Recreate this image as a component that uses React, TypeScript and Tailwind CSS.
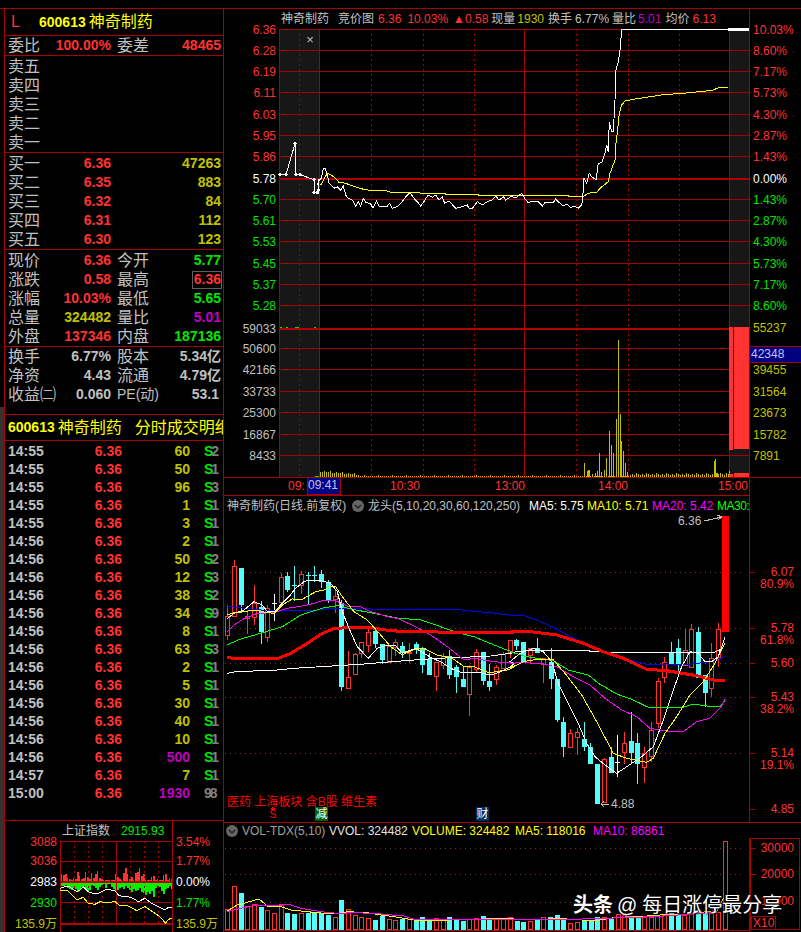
import React from "react";

const R = "#ff3232";
const G = "#00e600";
const Y = "#c0c000";
const W = "#c0c0c0";
const M = "#c000c0";
const L = "#a80000";

const zp = (ox: number, oy: number, p: number[]) => {
  const out: string[] = [];
  for (let i = 0; i < p.length; i += 2) out.push(`${(ox + p[i] / 3).toFixed(1)},${(oy + p[i + 1] / 3).toFixed(1)}`);
  return out.join(" ");
};

function T({ x, y, c, a, s = 12, children }: { x: number; y: number; c: string; a?: "start" | "end" | "middle"; s?: number; children: React.ReactNode }) {
  return (
    <text x={x} y={y} fill={c} textAnchor={a ?? "start"} dominantBaseline="central" fontSize={s}>
      {children}
    </text>
  );
}

function Row({ a, b, ac = W, c, d, bc, dc }: { a: string; b?: string; ac?: string; c?: string; d?: string; bc?: string; dc?: string }) {
  return (
    <div className="flex h-[19px] items-center pl-[3px] leading-[19px] whitespace-nowrap">
      <span className="w-[32px] shrink-0 text-[16px]" style={{ color: ac }}>{a}</span>
      <span className="w-[71px] shrink-0 text-right text-[14px] font-bold" style={{ color: bc }}>{b}</span>
      {c && <span className="ml-[6px] w-[32px] shrink-0 text-[16px] text-[#c0c0c0]">{c}</span>}
      {d && <span className="w-[72px] shrink-0 text-right text-[14px] font-bold" style={{ color: dc }}>{d}</span>}
    </div>
  );
}

function Book({ a, p, v }: { a: string; p?: string; v?: string }) {
  return (
    <div className="flex h-[19px] items-center pl-[3px] leading-[19px]">
      <span className="w-[32px] shrink-0 text-[16px] text-[#c0c0c0]">{a}</span>
      <span className="w-[71px] shrink-0 text-right text-[14px] font-bold text-[#ff3232]">{p}</span>
      <span className="w-[110px] shrink-0 text-right text-[14px] font-bold text-[#c0c000]">{v}</span>
    </div>
  );
}

const trades: [string, string, string, string][] = [
  ["14:55", "60", "S", "2"], ["14:55", "50", "S", "1"], ["14:55", "96", "S", "3"], ["14:55", "1", "S", "1"], ["14:55", "3", "S", "1"],
  ["14:56", "2", "S", "1"], ["14:56", "50", "S", "2"], ["14:56", "12", "S", "3"], ["14:56", "38", "S", "2"], ["14:56", "34", "S", "9"],
  ["14:56", "8", "S", "1"], ["14:56", "63", "S", "3"], ["14:56", "2", "S", "1"], ["14:56", "5", "S", "1"], ["14:56", "30", "S", "1"],
  ["14:56", "40", "S", "1"], ["14:56", "10", "S", "1"], ["14:56", "500", "S", "1"], ["14:57", "7", "S", "1"], ["15:00", "1930", "9", "8"],
];

const gridY = [29, 50, 71, 92, 114, 135, 156, 178, 199, 220, 241, 263, 284, 305, 328, 348, 369, 391, 412, 434, 455, 477];
const priceL: [string, string][] = [
  ["6.36", R], ["6.28", R], ["6.19", R], ["6.11", R], ["6.03", R], ["5.95", R], ["5.86", R], ["5.78", "#ffffff"], ["5.70", G], ["5.61", G], ["5.53", G], ["5.45", G], ["5.37", G], ["5.28", G],
];
const pctR: [string, string][] = [
  ["10.03%", R], ["8.60%", R], ["7.17%", R], ["5.73%", R], ["4.30%", R], ["2.87%", R], ["1.43%", R], ["0.00%", "#ffffff"], ["1.43%", G], ["2.87%", G], ["4.30%", G], ["5.73%", G], ["7.17%", G], ["8.60%", G],
];
const volL = ["59033", "50600", "42166", "33733", "25300", "16867", "8433"];
const volR = ["55237", "", "", "39455", "31564", "23673", "15782", "7891"];

const whiteA = [168,524,186,524,213,431,216,524,228,524,270,539,270,578,280,578,284,570,282,552,285,540,292,535,298,505,303,505,310,525,315,548,330,565,340,560,350,570,358,558,365,585,372,595,385,600,395,618,403,605,410,618,418,595,425,607,440,612,447,625,457,603,465,618,490,618,497,610,505,625,520,620,535,605,545,590,558,578,570,595,580,605,590,618,603,600,612,585,625,592,635,585,645,600,655,590,662,610,675,603,695,625,715,620,730,615,735,625,745,625,760,605,775,615,790,605,805,600,815,588,825,600,840,590,845,600,860,590,870,585];
const whiteB = [0,590,20,592,35,580,45,597,55,608,70,603,85,605,97,618,105,608,130,608,137,597,145,605,160,618,170,612,180,622,195,620,205,625,215,615,218,595,222,535,230,550,238,520,245,530,258,540,265,490,275,488,285,460,290,435,295,455,298,365,305,395,310,395,315,300,318,210,325,185,330,150,335,88,655,88];
const yellowA = [290,555,310,520,330,530,345,547,365,550,380,556,410,566,445,572,485,572,505,578,585,578,590,580,662,580,665,583,760,583,765,586,870,586];
const yellowB = [0,586,175,586,175,589,220,589,235,580,262,576,270,565,295,545,300,520,315,480,318,430,322,400,328,340,335,315,345,303,370,298,420,290,460,284,520,280,580,274,610,270,625,263,655,262];
const dots = [[168,524],[186,524],[213,431],[216,524],[228,524],[270,539],[270,578],[280,578],[284,570],[282,552],[285,540]];
const spikes: [number, number][] = [[222,490],[230,512],[235,510],[238,510],[247,522],[255,518],[262,513],[268,460],[274,515],[282,510],[289,475],[298,393],[304,435],[310,458],[317,405],[319,358],[325,120],[331,342],[334,422],[340,452],[346,490],[352,515],[612,483],[616,478],[622,520],[630,518],[657,513]];

function Intraday() {
  const bars: React.ReactNode[] = [];
  for (let x = 320; x < 729; x += 2) {
    let h = 1;
    if (x < 360) h = 5 - Math.floor((x - 320) / 12) + (x % 6 === 0 ? 1 : 0);
    else if (x < 585) h = x % 14 === 0 ? 2 : 1;
    else if (x > 628) h = 2 + ((x * 7) % 5) % 3;
    bars.push(<line key={x} x1={x + 0.5} x2={x + 0.5} y1={477} y2={477 - h} stroke={Y} />);
  }
  return (
    <svg width={577} height={466} viewBox="224 29 577 466" shapeRendering="crispEdges" className="block overflow-visible">
      <rect x={279} y={29} width={40} height={448} fill="#171717" />
      <rect x={729} y={29} width={20} height={448} fill="#171717" />
      {gridY.map((y) => (
        <line key={y} x1={279} x2={749} y1={y + 0.5} y2={y + 0.5} stroke={y === 178 || y === 328 ? "#b00000" : L} strokeWidth={y === 178 || y === 328 ? 2 : 1} />
      ))}
      {[299, 371, 423, 474, 576, 628, 679].map((x) => (
        <line key={x} x1={x + 0.5} x2={x + 0.5} y1={29} y2={477} stroke={L} strokeDasharray="2 3" />
      ))}
      {[279, 319, 524, 729].map((x) => (
        <line key={x} x1={x + 0.5} x2={x + 0.5} y1={29} y2={477} stroke={L} />
      ))}
      <line x1={749.5} x2={749.5} y1={29} y2={495} stroke={L} />
      <line x1={224} x2={801} y1={477.5} y2={477.5} stroke={L} />
      <polyline points={zp(224, 0, yellowA)} fill="none" stroke="#ffff00" />
      <polyline points={zp(510, 0, yellowB)} fill="none" stroke="#ffff00" />
      <polyline points={zp(224, 0, whiteA)} fill="none" stroke="#ffffff" />
      <polyline points={zp(510, 0, whiteB)} fill="none" stroke="#ffffff" />
      {dots.map(([x, y], i) => <circle key={i} cx={224 + x / 3} cy={y / 3} r={1.6} fill="#ffffff" />)}
      <rect x={728} y={28} width={21} height={3} fill="#ffffff" />
      {bars}
      {spikes.map(([z, t], i) => {
        const x = Math.round(510 + z / 3) + 0.5;
        return <line key={i} x1={x} x2={x} y1={477} y2={300 + t / 3} stroke={Y} />;
      })}
      {[280, 286, 295, 296, 297, 314, 315, 317].map((x, i) => <rect key={i} x={x} y={i > 5 ? 476 : 327} width={2} height={1} fill={G} />)}
      <rect x={729} y={327} width={4} height={123} fill={R} />
      <rect x={734} y={327} width={15} height={122} fill={R} />
      <rect x={729} y={474} width={4} height={3} fill={R} />
      <rect x={734} y={473} width={15} height={4} fill={R} />
      <text x={310} y={39} fill="#c0c0c0" textAnchor="middle" dominantBaseline="central" fontSize={13}>×</text>
      {priceL.map(([t, c], i) => <T key={i} x={276} y={gridY[i] + 0.5} c={c} a="end">{t}</T>)}
      {pctR.map(([t, c], i) => <T key={i} x={753} y={gridY[i] + 0.5} c={c}>{t}</T>)}
      {volL.map((t, i) => <T key={i} x={276} y={gridY[14 + i] + 0.5} c="#c0c0c0" a="end">{t}</T>)}
      {volR.map((t, i) => (t ? <T key={i} x={753} y={[328, 346, 0, 370, 392, 413, 435, 456][i]} c={Y}>{t}</T> : null))}
      <rect x={750} y={346} width={51} height={16} fill="#000080" />
      <line x1={749} x2={801} y1={346.5} y2={346.5} stroke={L} />
      <line x1={749} x2={801} y1={362.5} y2={362.5} stroke={L} />
      <T x={751} y={354} c="#c0c0ff">42348</T>
      <T x={288} y={486} c={R}>09:</T>
      <T x={405} y={486} c={R} a="middle">10:30</T>
      <T x={510} y={486} c={R} a="middle">13:00</T>
      <T x={613} y={486} c={R} a="middle">14:00</T>
      <T x={733} y={486} c={R} a="middle">15:00</T>
      <rect x={307.5} y={477.5} width={33} height={17} fill="#000080" stroke={L} />
      <T x={308} y={485} c="#c0c0ff">09:41</T>
    </svg>
  );
}

type C = [number, number, number, number, number, "r" | "c" | "w" | "d"];
const candlesA: C[] = [
  [10,195,227,285,300,"r"],[30,60,78,228,232,"r"],[50,85,85,195,220,"c"],[70,210,228,235,282,"r"],[90,135,190,232,255,"r"],[112,183,202,276,312,"c"],[130,195,203,290,305,"r"],[151,162,190,190,243,"w"],[172,100,110,185,190,"r"],[190,97,108,150,157,"c"],[211,78,135,135,182,"d"],[232,94,103,135,162,"r"],[253,97,105,105,195,"d"],[271,78,105,105,125,"d"],[292,90,103,125,145,"c"],[313,120,125,180,190,"c"],[334,150,168,177,218,"r"],[352,180,190,440,452,"c"],[373,333,412,443,443,"r"],[394,340,343,401,401,"r"],[412,307,307,340,353,"r"],[433,268,277,315,335,"r"],[454,270,273,312,325,"c"],[475,312,312,360,372,"c"],[494,318,318,367,367,"r"],[514,297,307,320,348,"r"],[535,307,318,340,353,"c"],[556,310,335,338,368,"r"],[575,307,312,330,342,"c"],[595,320,325,375,398,"c"],[616,340,358,405,405,"c"],[637,365,367,407,452,"r"],[656,338,348,375,388,"r"],[676,330,348,405,417,"c"],[697,375,382,410,458,"c"],[716,377,417,441,441,"c"],[736,375,380,461,528,"r"],[757,328,337,388,395,"r"],[778,336,337,423,435,"c"],[796,372,423,441,452,"c"],[817,375,382,418,435,"r"],[838,335,343,385,385,"r"],
];
const candlesB: C[] = [
  [0,300,300,335,353,"r"],[18,298,300,318,330,"c"],[40,305,306,368,368,"c"],[60,323,325,345,370,"r"],[80,295,325,340,340,"c"],[100,355,355,373,430,"r"],[122,325,365,417,447,"c"],[142,417,417,540,545,"c"],[160,530,547,620,650,"c"],[181,568,580,622,622,"r"],[202,565,575,592,645,"r"],[223,545,597,622,632,"c"],[241,610,622,672,672,"c"],[262,672,672,792,792,"c"],[282,655,658,786,786,"r"],[304,620,652,700,700,"c"],[322,585,665,665,712,"w"],[343,575,610,635,672,"r"],[364,517,603,640,670,"c"],[382,580,610,672,732,"c"],[403,620,640,680,730,"r"],[424,545,570,647,665,"r"],[445,415,424,548,565,"r"],[463,352,367,412,428,"r"],[484,305,335,375,375,"c"],[505,298,323,372,395,"c"],[526,268,330,375,375,"r"],[544,252,268,380,380,"r"],[565,262,276,415,415,"c"],[586,405,405,458,500,"c"],[604,310,355,443,470,"r"],[625,248,268,352,380,"r"],
];
const ma = {
  w5a: [10,235,30,220,60,210,90,185,115,195,130,215,151,215,175,190,195,170,215,145,240,125,255,120,290,122,320,130,340,155,355,215,375,265,400,320,433,355,460,325,480,318,515,317,535,340,560,330,575,325,600,340,625,355,650,365,680,385,710,397,770,398,800,405,830,395,860,380,870,370],
  w5b: [0,365,30,340,70,325,100,335,125,365,145,430,165,470,200,540,230,610,255,650,285,675,320,700,350,680,395,650,430,620,460,540,490,450,515,380,540,335,565,340,585,365,605,365,625,350,645,290],
  y10a: [10,225,30,218,60,215,90,210,130,218,151,220,175,195,205,177,235,178,275,155,300,150,320,140,335,140,355,170,390,215,430,240,470,285,500,320,535,345,570,328,600,325,640,345,665,350,690,358,720,380,750,380,795,398,815,395,850,390,870,382],
  y10b: [0,385,40,365,80,358,130,360,165,400,215,465,260,545,310,640,350,655,410,667,430,655,465,580,500,530,540,465,580,425,615,370,645,310],
  m20a: [10,275,30,255,60,236,100,220,150,218,190,205,240,197,270,190,300,180,330,180,370,198,410,200,435,213,490,230,520,235,570,258,620,285,670,320,720,360,750,355,790,362,830,367,870,367],
  m20b: [0,370,30,368,90,370,140,380,190,410,240,435,285,475,335,510,380,530,420,565,480,575,520,575,560,545,600,535,630,505,645,478],
  g30a: [10,314,50,297,100,283,175,260,230,225,300,203,340,197,385,208,440,218,520,234,590,240,650,260,700,278,750,290,810,315,870,338],
  g30b: [0,335,50,350,130,362,175,390,235,405,265,430,320,462,365,478,415,502,520,502,550,492,590,498,630,498,645,483],
  b60a: [10,199,60,205,130,212,250,213,330,205,380,206,500,208,705,208,725,212,800,218,870,227],
  b60b: [0,226,45,228,80,240,130,262,200,300,270,330,320,350,410,373,470,372,530,374,600,365,645,350],
  r120a: [10,353,50,356,160,356,200,340,250,310,290,283,330,265,430,261,475,269,540,275,870,278],
  r120b: [0,275,70,276,140,285,220,310,280,335,340,355,410,388,470,392,560,407,610,420,645,420],
  w250a: [10,400,40,394,140,392,210,385,325,378,420,372,530,363,640,355,720,352,800,348,870,338],
  w250b: [0,338,60,330,235,330,240,335,350,338,610,338,640,325],
};

function Candle({ c, ox }: { c: C; ox: number }) {
  const [z, hi, t, b, lo, k] = c;
  const x = Math.round(ox + z / 3);
  const Yp = (v: number) => Math.round(540 + v / 3);
  const col = k === "r" ? R : k === "w" ? "#ffffff" : "#54fcfc";
  const top = Yp(t), bot = Yp(b);
  return (
    <g>
      <line x1={x + 0.5} x2={x + 0.5} y1={Yp(hi)} y2={top} stroke={col} />
      <line x1={x + 0.5} x2={x + 0.5} y1={bot} y2={Yp(lo)} stroke={col} />
      {k === "w" || k === "d" ? (
        <line x1={x - 2} x2={x + 3} y1={top + 0.5} y2={top + 0.5} stroke={col} />
      ) : k === "r" ? (
        <rect x={x - 1.5} y={top + 0.5} width={4} height={Math.max(bot - top, 1)} fill="#000000" stroke={R} />
      ) : (
        <rect x={x - 2} y={top} width={5} height={Math.max(bot - top, 1)} fill="#54fcfc" />
      )}
    </g>
  );
}

function MA({ a, b, c, w = 1 }: { a: number[]; b: number[]; c: string; w?: number }) {
  const f = zp(224, 540, a);
  const g = zp(510, 540, b);
  return <polyline points={`${f} ${g}`} fill="none" stroke={c} strokeWidth={w} />;
}

function KChart() {
  const axis: [string, number][] = [
    ["6.07", 572], ["80.9%", 584], ["5.78", 628], ["61.8%", 640], ["5.60", 663], ["5.43", 697], ["38.2%", 709], ["5.14", 753], ["19.1%", 765], ["4.85", 809],
  ];
  return (
    <svg width={577} height={307} viewBox="224 515 577 307" shapeRendering="crispEdges" className="block">
      {[572, 628, 663, 697, 753].map((y) => (
        <g key={y}>
          <line x1={225} x2={744} y1={y + 0.5} y2={y + 0.5} stroke="#803030" strokeDasharray="1 4" />
          <line x1={749} x2={755} y1={y + 0.5} y2={y + 0.5} stroke={L} />
        </g>
      ))}
      <line x1={749} x2={755} y1={809.5} y2={809.5} stroke={L} />
      <line x1={749.5} x2={749.5} y1={515} y2={822} stroke={L} />
      {candlesA.map((c, i) => <Candle key={i} c={c} ox={224} />)}
      {candlesB.map((c, i) => <Candle key={i} c={c} ox={510} />)}
      <rect x={722} y={516} width={7} height={116} fill="#ff0000" />
      <MA a={ma.w250a} b={ma.w250b} c="#ffffff" />
      <MA a={ma.b60a} b={ma.b60b} c="#0000ff" />
      <MA a={ma.g30a} b={ma.g30b} c="#00ff00" />
      <MA a={ma.m20a} b={ma.m20b} c="#ff00ff" />
      <MA a={ma.r120a} b={ma.r120b} c="#ff0000" w={3} />
      <MA a={ma.y10a} b={ma.y10b} c="#ffff00" />
      <MA a={ma.w5a} b={ma.w5b} c="#ffffff" />
      <T x={678} y={521} c="#c0c0c0">6.36</T>
      <line x1={704} x2={722} y1={521} y2={517} stroke="#c0c0c0" />
      <polyline points="717,515 722,517 718,520" fill="none" stroke="#c0c0c0" />
      <T x={611} y={804} c="#c0c0c0">4.88</T>
      <line x1={601} x2={609} y1={804} y2={804} stroke="#c0c0c0" />
      <polyline points="604,801 601,804 604,807" fill="none" stroke="#c0c0c0" />
      <text x={227} y={802} fill="#ff0000" dominantBaseline="central" fontSize={12}>医药 上海板块 含B股 维生素</text>
      <T x={273} y={814} c="#ff0000" a="middle" s={11}>S</T>
      <polygon points="270.5,810 273,806 275.5,810" fill="#ff0000" />
      <rect x={315} y={807} width={13} height={14} fill="#006400" />
      <T x={321.5} y={814} c="#ffffff" a="middle" s={12}>减</T>
      <rect x={476} y={807} width={13} height={14} fill="#003060" />
      <T x={482.5} y={814} c="#ffffff" a="middle" s={12}>财</T>
      {axis.map(([t, y], i) => <T key={i} x={794} y={y} c={R} a="end">{t}</T>)}
    </svg>
  );
}

const volA: [number, number, "r" | "c"][] = [
  [10,388,"r"],[30,318,"r"],[50,340,"c"],[70,378,"r"],[90,372,"r"],[111,380,"c"],[130,390,"r"],[151,400,"r"],[172,372,"r"],[190,398,"c"],[211,403,"c"],[232,400,"r"],[253,398,"c"],[271,400,"c"],[292,400,"c"],[313,405,"c"],[334,412,"r"],[352,360,"c"],[373,388,"r"],[394,405,"r"],[412,412,"r"],[433,414,"r"],[454,420,"c"],[475,408,"c"],[494,418,"r"],[514,421,"r"],[535,418,"c"],[556,418,"r"],[575,420,"c"],[595,411,"c"],[616,420,"c"],[637,415,"r"],[656,420,"r"],[676,411,"c"],[697,418,"c"],[716,423,"c"],[736,418,"r"],[757,415,"r"],[778,408,"c"],[796,418,"c"],[817,418,"r"],[838,418,"r"],[859,412,"r"],[878,423,"c"],
];
const volB: [number, number, "r" | "c"][] = [
  [10,365,"c"],[30,362,"r"],[50,360,"c"],[70,352,"r"],[90,352,"c"],[110,345,"c"],[130,355,"c"],[150,370,"r"],[172,365,"r"],[192,362,"c"],[212,360,"c"],[232,352,"c"],[252,352,"r"],[273,358,"c"],[293,343,"r"],[313,346,"r"],[333,352,"c"],[353,352,"c"],[373,352,"r"],[393,350,"r"],[412,345,"r"],[433,345,"r"],[453,340,"c"],[473,345,"c"],[493,345,"r"],[513,343,"r"],[533,340,"c"],[555,340,"c"],[573,338,"r"],[595,335,"r"],[616,124,"r"],
];

function VolChart() {
  const bar = (x: number, top: number, k: "r" | "c", key: string) =>
    k === "r" ? (
      <rect key={key} x={x - 1.5} y={top + 0.5} width={4} height={929 - top} fill="#000000" stroke={R} />
    ) : (
      <rect key={key} x={x - 2} y={top} width={5} height={930 - top} fill="#54fcfc" />
    );
  return (
    <svg width={577} height={94} viewBox="224 838 577 94" shapeRendering="crispEdges" className="block">
      {[848, 874, 902].map((y) => (
        <g key={y}>
          <line x1={225} x2={744} y1={y + 0.5} y2={y + 0.5} stroke="#803030" strokeDasharray="1 4" />
          <line x1={749} x2={756} y1={y + 0.5} y2={y + 0.5} stroke={L} />
        </g>
      ))}
      {volA.map(([z, t, k], i) => bar(Math.round(224 + z / 3), Math.round(780 + t / 3), k, `a${i}`))}
      {volB.map(([z, t, k], i) => bar(Math.round(520 + z / 3), Math.round(800 + t / 3), k, `b${i}`))}
      <polyline points={`${zp(224, 780, [10,393,40,375,70,367,105,357,130,378,170,380,200,390,250,395,300,400,340,402,370,395,430,398,470,405,510,410,570,420,620,422,680,420,760,418,850,415,900,420])} ${zp(520, 800, [0,358,60,360,100,355,160,358,210,362,240,360,290,352,340,350,380,348,420,345,500,342,560,335,590,335,610,295])}`} fill="none" stroke="#ffff00" />
      <polyline points={`${zp(224, 780, [10,395,50,385,100,375,160,378,195,373,230,385,290,395,340,400,400,398,470,402,540,408,570,418,900,418])} ${zp(520, 800, [0,358,100,358,160,358,250,355,350,352,450,347,510,342,570,338,610,310])}`} fill="none" stroke="#ff00ff" />
      <line x1={224} x2={749} y1={930.5} y2={930.5} stroke={L} />
      <line x1={749.5} x2={749.5} y1={838} y2={932} stroke={L} />
      <rect x={750.5} y={838} width={49} height={91.5} fill="none" stroke={L} />
      <T x={794} y={848} c={R} a="end">30000</T>
      <T x={794} y={874} c={R} a="end">20000</T>
      <T x={794} y={901} c={R} a="end">10000</T>
      <rect x={751.5} y={916.5} width={24} height={13} fill="#000000" stroke={L} />
      <T x={753} y={923} c={R}>X10</T>
    </svg>
  );
}

const miniRed = [7,6,7,3,2,1,3,2,9,5,2,3,9,4,2,8,3,7,10,3,2,1,1,1,1,1,1,7,4,2,1,8,13,7,2,4,1,8,9,13,5,7,1,1,1,4,5,1,2,1,1,6,7,1,3,2];
const miniGreen = [3,3,2,5,6,7,5,6,9,7,4,3,6,9,7,2,3,5,7,4,2,1,5,1,1,4,6,8,7,5,4,6,3,5,7,9,6,8,7,5,9,10,12,9,11,8,14,5,3,4,8,11,6,5,3,6];

function Mini() {
  return (
    <svg width={218} height={91} viewBox="5 841 218 91" shapeRendering="crispEdges" className="block overflow-visible">
      {miniRed.map((h, i) => <rect key={i} x={61 + i * 2} y={881 - h} width={i % 3 === 0 ? 1 : 2} height={h} fill={R} />)}
      {miniGreen.map((h, i) => <rect key={i} x={61 + i * 2} y={883} width={2} height={h} fill="#00f000" />)}
      {[841, 861, 902].map((y) => <line key={y} x1={60} x2={172} y1={y + 0.5} y2={y + 0.5} stroke={L} />)}
      <line x1={60} x2={172} y1={882} y2={882} stroke="#b00000" strokeWidth={2} />
      <line x1={60} x2={172} y1={923.5} y2={923.5} stroke="#b00000" strokeWidth={2} />
      {[74, 88, 102, 130, 144, 158].map((x) => <line key={x} x1={x + 0.5} x2={x + 0.5} y1={841} y2={924} stroke={L} strokeDasharray="2 3" />)}
      <line x1={60.5} x2={60.5} y1={841} y2={932} stroke={L} />
      <line x1={116.5} x2={116.5} y1={841} y2={924} stroke={L} />
      <line x1={172.5} x2={172.5} y1={841} y2={932} stroke={L} />
      <polyline points={zp(0, 760, [180,390,200,390,215,405,230,420,250,412,265,430,285,433,300,425,320,428,345,425,360,437,385,438,410,452,435,440,460,457,480,470,497,490,505,478,517,475])} fill="none" stroke="#ffff00" />
      <polyline points={zp(0, 760, [180,385,195,380,205,378,215,385,230,395,240,390,250,380,265,395,280,400,295,400,305,395,320,388,345,392,355,405,370,410,385,410,400,415,415,425,435,415,455,430,475,440,495,450,505,442,517,442])} fill="none" stroke="#ffffff" />
      {([["3088", 842, R], ["3036", 861, R], ["2983", 882, "#ffffff"], ["2930", 903, G], ["135.9万", 924, Y]] as [string, number, string][]).map(([t, y, c]) => <T key={t} x={57} y={y} c={c} a="end">{t}</T>)}
      {([["3.54%", 842, R], ["1.77%", 861, R], ["0.00%", 882, "#ffffff"], ["1.77%", 903, G], ["135.9万", 924, Y]] as [string, number, string][]).map(([t, y, c], i) => <T key={i} x={176} y={y} c={c}>{t}</T>)}
    </svg>
  );
}

function Chevron() {
  return (
    <svg width={12} height={12} viewBox="0 0 12 12" className="block shrink-0">
      <circle cx={6} cy={6} r={6} fill="#666666" />
      <path d="M3 5 L6 8 L9 5" fill="none" stroke="#222222" strokeWidth={1.5} />
    </svg>
  );
}

export default function App() {
  return (
    <div className="relative h-[932px] w-[801px] overflow-hidden bg-black pt-2 font-['Liberation_Sans','Noto_Sans_CJK_SC',sans-serif] text-[#c0c0c0]">
      <div className="flex h-[924px] border-t border-[#a80000]">
        {/* left */}
        <div className="flex w-[224px] shrink-0">
          <div className="flex w-[4px] shrink-0 flex-col">
            <div className="h-[398px] shrink-0" />
            <div className="flex-1 bg-[#333333]" />
          </div>
          <div className="w-[220px] shrink-0 border-x border-[#a80000]">
            <div className="flex h-[27px] items-center border-b border-[#a80000] pl-[6px]">
              <span className="w-[28px] text-[16px] text-[#ff3232]">L</span>
              <span className="text-[14px] font-bold text-[#ffff00]">600613</span>
              <span className="ml-[3px] text-[16px] text-[#ffff00]">神奇制药</span>
            </div>
            <div className="h-[20px] border-b border-[#a80000]">
              <Row a="委比" b="100.00%" bc={R} c="委差" d="48465" dc={R} />
            </div>
            <div className="h-[97px] border-b border-[#a80000] pt-[1px]">
              {["卖五", "卖四", "卖三", "卖二", "卖一"].map((a) => <Book key={a} a={a} />)}
            </div>
            <div className="h-[97px] border-b border-[#a80000] pt-[1px]">
              <Book a="买一" p="6.36" v="47263" />
              <Book a="买二" p="6.35" v="883" />
              <Book a="买三" p="6.32" v="84" />
              <Book a="买四" p="6.31" v="112" />
              <Book a="买五" p="6.30" v="123" />
            </div>
            <div className="relative h-[97px] border-b border-[#a80000] pt-[1px]">
              <Row a="现价" b="6.36" bc={R} c="今开" d="5.77" dc={G} />
              <Row a="涨跌" b="0.58" bc={R} c="最高" d="6.36" dc={R} />
              <Row a="涨幅" b="10.03%" bc={R} c="最低" d="5.65" dc={G} />
              <Row a="总量" b="324482" bc={Y} c="量比" d="5.01" dc={M} />
              <Row a="外盘" b="137346" bc={R} c="内盘" d="187136" dc={G} />
              <div className="absolute left-[187px] top-[21px] h-[18px] w-[30px] border border-[#606060]" />
            </div>
            <div className="h-[68px] border-b border-[#a80000]">
              <Row a="换手" b="6.77%" bc={W} c="股本" d="5.34亿" dc={W} />
              <Row a="净资" b="4.43" bc={W} c="流通" d="4.79亿" dc={W} />
              <div className="flex h-[19px] items-center pl-[3px] leading-[19px] whitespace-nowrap">
                <span className="w-[32px] shrink-0 text-[16px]">收益㈡</span>
                <span className="w-[71px] shrink-0 text-right text-[14px] font-bold">0.060</span>
                <span className="ml-[6px] w-[42px] shrink-0 text-[14px]">PE(动)</span>
                <span className="w-[60px] shrink-0 text-right text-[14px] font-bold">53.1</span>
              </div>
            </div>
            <div className="flex h-[26px] items-center overflow-hidden whitespace-nowrap border-b border-[#a80000] pl-[3px]">
              <span className="text-[14px] font-bold text-[#ffff00]">600613</span>
              <span className="ml-[3px] text-[16px] text-[#ffff00]">神奇制药</span>
              <span className="ml-[13px] text-[16px] text-[#ffff00]">分时成交明细</span>
            </div>
            <div className="h-[380px] border-b border-[#a80000] pt-[1px]">
              {trades.map(([t, v, s, d], i) => {
                const big = v === "500" || v === "1930";
                const last = i === trades.length - 1;
                return (
                  <div key={i} className="flex h-[18px] items-center pl-[3px] text-[14px] font-bold leading-[18px]">
                    <span className="w-[36px] shrink-0 text-[#c0c0c0]">{t}</span>
                    <span className="w-[78px] shrink-0 text-right text-[#ff3232]">6.36</span>
                    <span className="w-[68px] shrink-0 text-right" style={{ color: big ? M : Y }}>{v}</span>
                    <span className="ml-[14px] shrink-0" style={{ color: last ? "#808080" : G }}>{s}</span>
                    <span className="ml-[-2px] shrink-0 text-[#808080]">{d}</span>
                  </div>
                );
              })}
            </div>
            <div>
              <div className="flex h-[20px] w-[168px] items-center border-r border-[#a80000] pl-[57px] whitespace-nowrap">
                <span className="text-[12px] text-[#c0c0c0]">上证指数</span>
                <span className="ml-[11px] text-[12px] text-[#00e600]">2915.93</span>
              </div>
              <Mini />
            </div>
          </div>
        </div>
        {/* right */}
        <div className="flex w-[577px] shrink-0 flex-col">
          <div className="flex h-[20px] w-[526px] items-center overflow-hidden border-r border-[#a80000] pl-[57px] text-[12px] whitespace-nowrap">
            <span className="text-[#c0c0c0]">神奇制药</span>
            <span className="ml-[9px] text-[#c0c0c0]">竞价图</span>
            <span className="ml-[4px] text-[#ff3232]">6.36</span>
            <span className="ml-[6px] text-[#ff3232]">10.03%</span>
            <span className="ml-[5px] text-[#ff3232]">▲0.58</span>
            <span className="ml-[3px] text-[#c0c0c0]">现量</span>
            <span className="ml-[2px] text-[#c0c000]">1930</span>
            <span className="ml-[4px] text-[#c0c0c0]">换手</span>
            <span className="ml-[3px] text-[#c0c0c0]">6.77%</span>
            <span className="ml-[3px] text-[#c0c0c0]">量比</span>
            <span className="ml-[2px] text-[#c000c0]">5.01</span>
            <span className="ml-[4px] text-[#c0c0c0]">均价</span>
            <span className="ml-[3px] text-[#ff3232]">6.13</span>
          </div>
          <Intraday />
          <div className="flex h-[20px] w-[526px] items-center overflow-hidden whitespace-nowrap border-r border-t border-[#a80000] pl-[3px] text-[12px]">
            <span className="w-[125px] shrink-0 text-[#c0c0c0]">神奇制药(日线.前复权)</span>
            <Chevron />
            <span className="ml-[4px] w-[161px] shrink-0 text-[#c0c0c0]">龙头(5,10,20,30,60,120,250)</span>
            <span className="w-[58px] shrink-0 text-white">MA5: 5.75</span>
            <span className="w-[65px] shrink-0 text-[#ffff00]">MA10: 5.71</span>
            <span className="w-[65px] shrink-0 text-[#ff00ff]">MA20: 5.42</span>
            <span className="shrink-0 tracking-[-0.5px] text-[#00ff00]">MA30:</span>
          </div>
          <KChart />
          <div className="flex h-[16px] items-center whitespace-nowrap border-t border-[#a80000] pl-[2px] text-[12px]">
            <Chevron />
            <span className="ml-[4px] w-[87px] shrink-0 text-[#a0a0a0]">VOL-TDX(5,10)</span>
            <span className="w-[83px] shrink-0 text-[#e0e0e0]">VVOL: 324482</span>
            <span className="w-[103px] shrink-0 text-[#ffff00]">VOLUME: 324482</span>
            <span className="w-[78px] shrink-0 text-[#ffff00]">MA5: 118016</span>
            <span className="shrink-0 text-[#ff00ff]">MA10: 86861</span>
          </div>
          <VolChart />
        </div>
      </div>
      <div className="absolute left-[573px] top-[891px] flex whitespace-nowrap text-[20px] leading-[28px] text-white [text-shadow:1px_1px_2px_#000,-1px_-1px_2px_#000]">
        <span className="font-bold">头条</span>
        <span className="ml-[4px]">@</span>
        <span className="ml-[5px]">每日涨停最分享</span>
      </div>
    </div>
  );
}
